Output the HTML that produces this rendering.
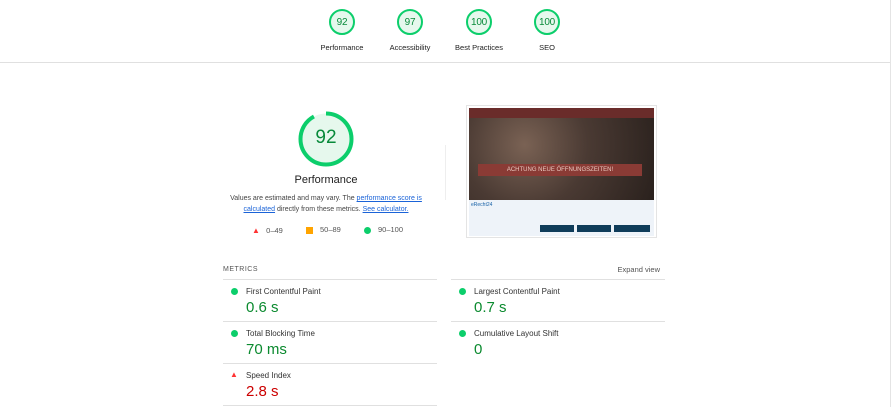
<!DOCTYPE html>
<html><head><style>
body{margin:0;width:891px;height:407px;background:#fff;font-family:"Liberation Sans",sans-serif;position:relative;overflow:hidden;color:#212121}
.a{position:absolute;line-height:1.15}
.g{position:absolute;width:26px;height:26px;border-radius:50%;background:#e6f8ed;border:2px solid #0cce6b;box-sizing:border-box;text-align:center;line-height:24px;font-family:"Liberation Sans",sans-serif;font-size:10px;color:#088a3a;letter-spacing:-0.2px}
.gl{position:absolute;font-size:7.5px;width:90px;text-align:center;top:43px;line-height:9px}
.ml{font-size:8px;color:#333}
.mv{font-size:15px;color:#0b8a2f}
.ln{position:absolute;height:1px;background:#e0e0e0}
.dot{position:absolute;width:7px;height:7px;border-radius:50%;background:#0cce6b}
</style></head><body>
<div class="a" style="right:0;top:0;width:1px;height:407px;background:#e4e4e4"></div>
<div class="ln" style="left:0;top:62px;width:890px"></div>

<div class="g" style="left:329px;top:9px">92</div>
<div class="g" style="left:397px;top:9px">97</div>
<div class="g" style="left:466px;top:9px">100</div>
<div class="g" style="left:534px;top:9px">100</div>
<div class="gl" style="left:297px">Performance</div>
<div class="gl" style="left:365px">Accessibility</div>
<div class="gl" style="left:434px">Best Practices</div>
<div class="gl" style="left:502px">SEO</div>

<svg class="a" style="left:298px;top:111px" width="56" height="56"><circle cx="28" cy="28" r="25.5" fill="#e6f8ed" stroke="#0cce6b" stroke-width="4" stroke-dasharray="147.4 160.2" transform="rotate(-90 28 28)"/></svg>
<div class="a" style="left:298px;top:127px;width:56px;text-align:center;font-size:19px;color:#088a3a">92</div>
<div class="a" style="left:276px;top:174px;width:100px;text-align:center;font-size:11px">Performance</div>
<div class="a" style="left:222px;top:193px;width:208px;text-align:center;font-size:7px;line-height:11px;color:#444">Values are estimated and may vary. The <span style="color:#1a63d8;text-decoration:underline">performance score is calculated</span> directly from these metrics. <span style="color:#1a63d8;text-decoration:underline">See calculator.</span></div>
<div class="a" style="left:252px;top:226px;font-size:7.5px;color:#555;white-space:nowrap"><span style="color:#f33;font-size:8px">▲</span>&nbsp;&nbsp;&nbsp;0–49</div>
<div class="a" style="left:306px;top:227px;width:7px;height:7px;background:#ffa400"></div>
<div class="a" style="left:320px;top:226px;font-size:7.5px;color:#555">50–89</div>
<div class="a" style="left:364px;top:227px;width:7px;height:7px;border-radius:50%;background:#0cce6b"></div>
<div class="a" style="left:378px;top:226px;font-size:7.5px;color:#555">90–100</div>
<div class="a" style="left:445px;top:145px;width:1px;height:55px;background:#eee"></div>

<div class="a" style="left:466px;top:105px;width:191px;height:133px;border:1px solid #e4e4e4;box-sizing:border-box;background:#fff"></div>
<div class="a" style="left:469px;top:108px;width:185px;height:92px;background:radial-gradient(circle at 30% 40%,#7a6254,#4a3a33 45%,#2a211d);"></div>
<div class="a" style="left:469px;top:108px;width:185px;height:10px;background:#6a2c2a"></div>
<div class="a" style="left:478px;top:164px;width:164px;height:12px;background:#8a3b35;color:#e8c9c0;font-size:6px;text-align:center;line-height:12px">ACHTUNG NEUE ÖFFNUNGSZEITEN!</div>
<div class="a" style="left:469px;top:200px;width:185px;height:36px;background:#eef3f9"></div>
<div class="a" style="left:471px;top:203px;font-size:5px;color:#1a63a8">eRecht24</div>
<div class="a" style="left:540px;top:225px;width:34px;height:7px;background:#0f3c5a"></div>
<div class="a" style="left:577px;top:225px;width:34px;height:7px;background:#0f3c5a"></div>
<div class="a" style="left:614px;top:225px;width:36px;height:7px;background:#0f3c5a"></div>

<div class="a" style="left:223px;top:265px;font-size:7px;line-height:9px;letter-spacing:.5px;color:#555">METRICS</div>
<div class="a" style="left:560px;top:265px;width:100px;text-align:right;font-size:7.5px;line-height:9px;color:#555">Expand view</div>
<div class="ln" style="left:223px;top:279px;width:214px"></div>
<div class="ln" style="left:451px;top:279px;width:214px"></div>
<div class="ln" style="left:223px;top:321px;width:214px"></div>
<div class="ln" style="left:451px;top:321px;width:214px"></div>
<div class="ln" style="left:223px;top:363px;width:214px"></div>
<div class="ln" style="left:223px;top:405px;width:214px"></div>

<div class="dot" style="left:231px;top:288px"></div>
<div class="a ml" style="left:246px;top:287px">First Contentful Paint</div>
<div class="a mv" style="left:246px;top:299px">0.6 s</div>
<div class="dot" style="left:459px;top:288px"></div>
<div class="a ml" style="left:474px;top:287px">Largest Contentful Paint</div>
<div class="a mv" style="left:474px;top:299px">0.7 s</div>
<div class="dot" style="left:231px;top:330px"></div>
<div class="a ml" style="left:246px;top:329px">Total Blocking Time</div>
<div class="a mv" style="left:246px;top:341px">70 ms</div>
<div class="dot" style="left:459px;top:330px"></div>
<div class="a ml" style="left:474px;top:329px">Cumulative Layout Shift</div>
<div class="a mv" style="left:474px;top:341px">0</div>
<div class="a" style="left:230px;top:370px;font-size:8px;color:#f33">▲</div>
<div class="a ml" style="left:246px;top:371px">Speed Index</div>
<div class="a mv" style="left:246px;top:383px;color:#c00">2.8 s</div>
</body></html>
